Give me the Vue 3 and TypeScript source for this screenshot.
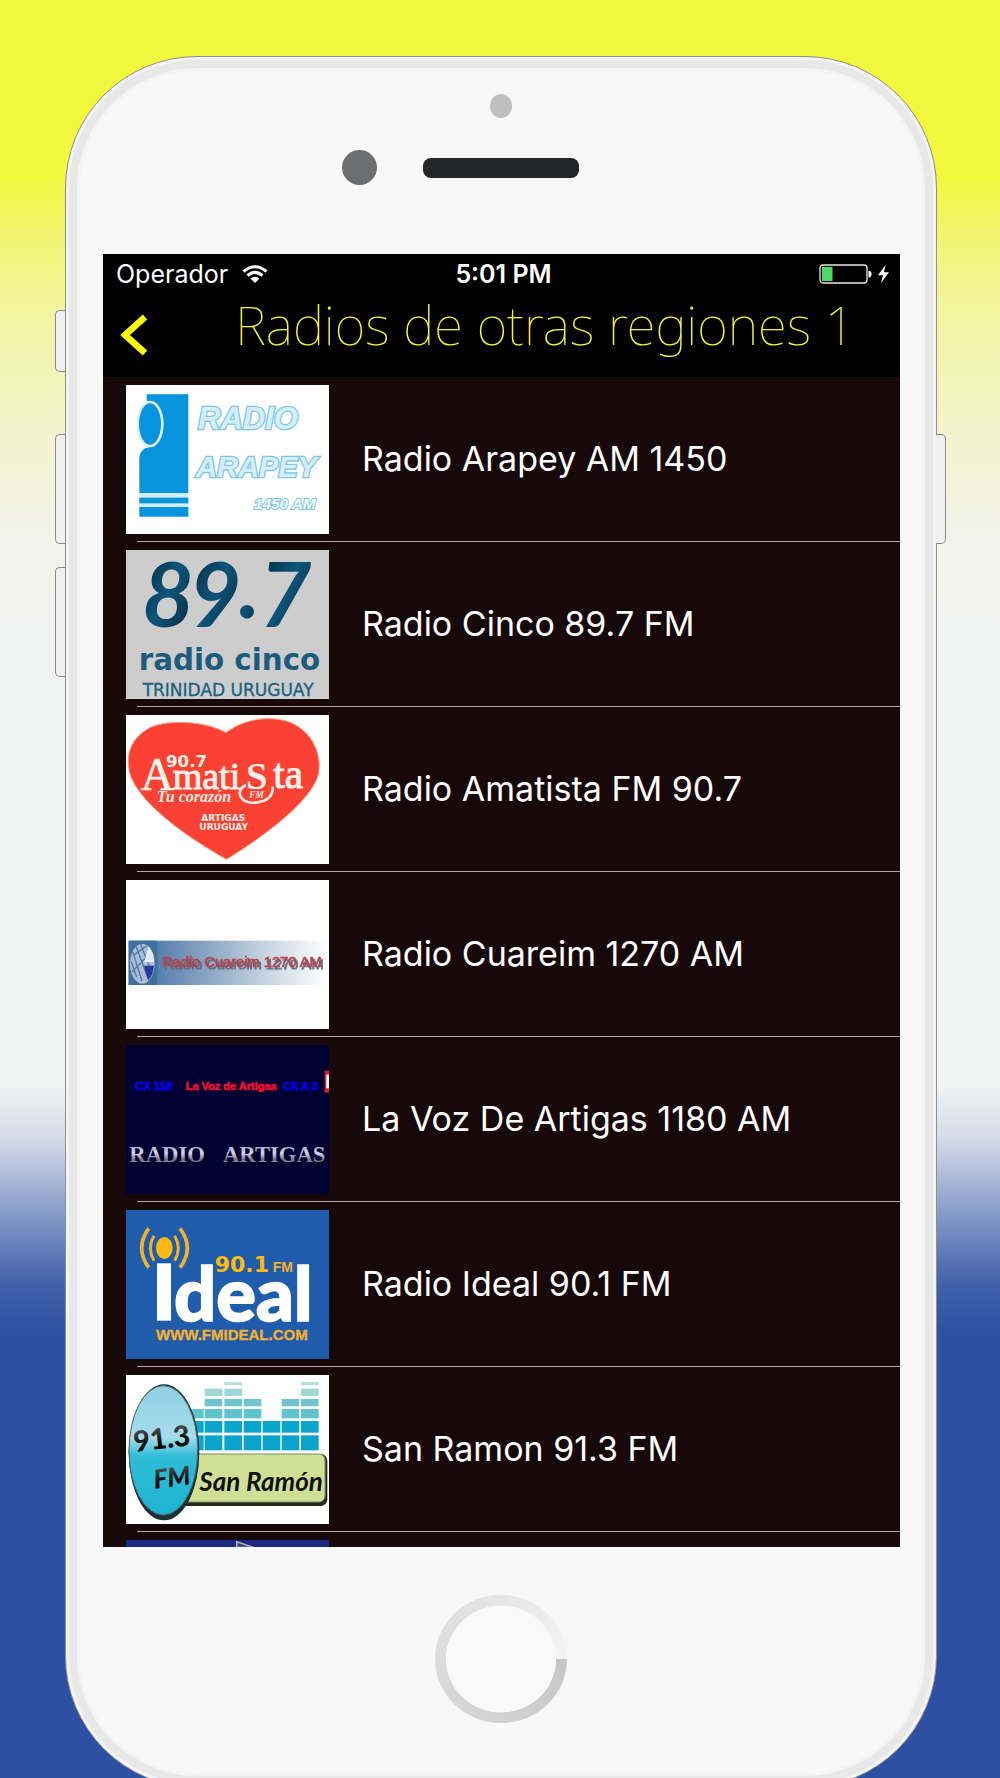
<script setup lang="ts">
interface Station {
  id: string
  name: string
}

const title = 'Radios de otras regiones 1'

const stations: Station[] = [
  { id: 'arapey', name: 'Radio Arapey AM 1450' },
  { id: 'cinco', name: 'Radio Cinco 89.7 FM' },
  { id: 'amatista', name: 'Radio Amatista FM 90.7' },
  { id: 'cuareim', name: 'Radio Cuareim 1270 AM' },
  { id: 'artigas', name: 'La Voz De Artigas 1180 AM' },
  { id: 'ideal', name: 'Radio Ideal 90.1 FM' },
  { id: 'ramon', name: 'San Ramon 91.3 FM' },
  { id: 'next', name: '' },
]

// Equalizer columns of the San Ramón logo: left edge and number of blocks
const eqColumns = [
  { x: 260, blocks: 3 },
  { x: 316, blocks: 5 },
  { x: 375, blocks: 6 },
  { x: 433, blocks: 4 },
  { x: 490, blocks: 2 },
  { x: 547, blocks: 4 },
  { x: 605, blocks: 6 },
]
const eqBlocks = [
  { y: 196, h: 45, fill: '#0aa3cb' },
  { y: 153, h: 35, fill: '#0aa6cb' },
  { y: 117, h: 28, fill: '#5fc2cc' },
  { y: 87, h: 22, fill: '#70c6cc' },
  { y: 56, h: 22, fill: '#9dd8d6' },
  { y: 36, h: 10, fill: '#b9e2de' },
]
</script>

<template>
  <main class="page">
    <div class="phone">
      <span class="side side-mute"></span>
      <span class="side side-up"></span>
      <span class="side side-down"></span>
      <span class="side side-power"></span>

      <div class="bezel-top">
        <span class="sensor"></span>
        <div class="ear">
          <span class="camera"></span>
          <span class="speaker"></span>
          <span class="ear-balance"></span>
        </div>
      </div>

      <section class="screen">
        <div class="status">
          <div class="carrier">
            <span>Operador</span>
            <svg class="wifi" viewBox="0 0 26 19" aria-hidden="true">
              <path d="M1.500 6.500Q13 -3 24.500 6.500" fill="none" stroke="#fff" stroke-width="3" />
              <path d="M5.500 10.500Q13 4.300 20.500 10.500" fill="none" stroke="#fff" stroke-width="3" />
              <path d="M8.500 13.600Q13 10 17.500 13.600L13 18Z" fill="#fff" />
            </svg>
          </div>
          <span class="clock">5:01 PM</span>
          <div class="power">
            <svg class="battery" viewBox="0 0 72 20" aria-hidden="true">
              <rect x="1" y="1" width="47" height="18" rx="3" fill="none" stroke="#e8e8e8" stroke-width="1.300" />
              <rect x="3" y="3" width="10.500" height="14" fill="#4cd964" />
              <path d="M49.500 6.500q3 0 3 3.500t-3 3.500z" fill="#fff" />
              <path d="M66.500 1L59 11.200h5L62 19l8-10.700h-5z" fill="#fff" />
            </svg>
          </div>
        </div>

        <header class="nav">
          <button class="back" type="button" aria-label="Atrás">
            <svg viewBox="0 0 28 42" aria-hidden="true">
              <path d="M25 3L5 21L25 39" fill="none" stroke="#ffff00" stroke-width="6.500" />
            </svg>
          </button>
          <h1>{{ title }}</h1>
        </header>

        <ul class="list">
          <li v-for="s in stations" :key="s.id">
            <a class="station" href="#">
              <svg class="thumb" viewBox="80 15 609 447" aria-hidden="true">
                <g v-if="s.id === 'arapey'">
                  <rect x="80" y="15" width="609" height="447" fill="#fff" />
                  <path d="M142 43H267V339H120V232Q122 206 150 202Q190 190 190 130Q186 72 142 62Z" fill="#0894dc" />
                  <ellipse cx="152" cy="132" rx="37" ry="66" fill="#0894dc" stroke="#d9f2fb" stroke-width="8" />
                  <path d="M104 50Q90 130 108 206L122 200Q104 130 124 68Z" fill="#fff" />
                  <rect x="120" y="339" width="147" height="71" fill="#cdeefb" />
                  <rect x="120" y="353" width="147" height="17" fill="#0894dc" />
                  <rect x="120" y="381" width="147" height="29" fill="#0894dc" />
                  <g class="sans italic" fill="#d5effa" stroke="#80c6e4" stroke-width="8" paint-order="stroke">
                    <text x="296" y="146" font-size="93">RADIO</text>
                    <text x="290" y="290" font-size="87">ARAPEY</text>
                    <text x="464" y="388" font-size="46" fill="#effaff" stroke-width="6">1450 AM</text>
                  </g>
                </g>

                <g v-else-if="s.id === 'cinco'">
                  <defs>
                    <linearGradient id="ink" x1="0" y1="0" x2="1" y2="1">
                      <stop offset="0" stop-color="#06202f" />
                      <stop offset="0.500" stop-color="#0d557a" />
                      <stop offset="1" stop-color="#05202f" />
                    </linearGradient>
                  </defs>
                  <rect x="80" y="15" width="609" height="447" fill="#cdcdcd" />
                  <g class="italic lato" fill="url(#ink)" font-size="270">
                    <text x="128" y="245">8</text>
                    <text x="270" y="245">9</text>
                    <text x="418" y="220">.</text>
                    <text x="480" y="245">7</text>
                  </g>
                  <text class="dejavu bold" x="118" y="375" font-size="88" fill="#1b5c7d">radio cinco</text>
                  <text class="dejavu" x="130" y="453" font-size="51" fill="#1b6183" stroke="#1b6183" stroke-width="1">TRINIDAD URUGUAY</text>
                </g>

                <g v-else-if="s.id === 'amatista'">
                  <rect x="80" y="15" width="609" height="447" fill="#fff" />
                  <path d="M380 68C320 32 190 25 140 60C95 90 80 130 90 185C110 270 250 375 382 448C500 375 640 270 658 190C668 120 630 60 570 36C520 18 440 22 380 68Z" fill="#fb4133" stroke="#f9a28b" stroke-width="3" />
                  <g fill="#fff1e8" stroke="#fff1e8">
                    <text class="dejavu bold" x="200" y="171" font-size="50" stroke="none">90.7</text>
                    <text class="serif" x="124" y="240" font-size="138" stroke-width="2">A</text>
                    <text class="serif" x="220" y="236" font-size="114" stroke-width="3">mati</text>
                    <text class="serif bold" x="440" y="238" font-size="116" stroke="none">S</text>
                    <text class="serif" x="522" y="234" font-size="124" stroke-width="3">ta</text>
                    <path d="M440 225C405 240 420 285 475 277C500 273 522 260 520 230" fill="none" stroke-width="8" />
                    <text class="serif bold italic" x="450" y="265" font-size="28" stroke="none">FM</text>
                    <text class="serif bold italic" x="172" y="277" font-size="48" stroke="none">Tu corazón</text>
                    <text class="dejavu bold" x="306" y="332" font-size="27" stroke="none">ARTIGAS</text>
                    <text class="dejavu bold" x="300" y="359" font-size="27" stroke="none">URUGUAY</text>
                  </g>
                </g>

                <g v-else-if="s.id === 'cuareim'">
                  <defs>
                    <linearGradient id="strip">
                      <stop offset="0" stop-color="#356b9e" />
                      <stop offset="0.300" stop-color="#7797ba" />
                      <stop offset="0.650" stop-color="#bfcddd" />
                      <stop offset="1" stop-color="#fff" />
                    </linearGradient>
                  </defs>
                  <rect x="80" y="15" width="609" height="447" fill="#fff" />
                  <rect x="88" y="197" width="594" height="133" fill="url(#strip)" />
                  <rect x="88" y="197" width="86" height="133" fill="#3d70a0" />
                  <ellipse cx="129" cy="266" rx="37" ry="60" fill="#a9bdd6" />
                  <path d="M100 230L128 318M110 214L146 310M124 208L158 296M96 260L112 306M98 290L158 230M104 240L142 212" stroke="#4f76a6" stroke-width="4" />
                  <path d="M134 262L148 215Q164 232 164 262Z" fill="#e4ebf4" />
                  <path d="M134 272H164Q160 305 146 316Z" fill="#2938a0" />
                  <text class="regular raised" x="188" y="276" font-size="44" fill="#b8434f" stroke="#b8434f" stroke-width="2">Radio Cuareim 1270 AM</text>
                </g>

                <g v-else-if="s.id === 'artigas'">
                  <defs>
                    <linearGradient id="steel" x1="0" y1="0" x2="0" y2="1">
                      <stop offset="0" stop-color="#8e8ea6" />
                      <stop offset="0.450" stop-color="#d6d6ee" />
                      <stop offset="0.700" stop-color="#77727c" />
                      <stop offset="1" stop-color="#b5b2b6" />
                    </linearGradient>
                  </defs>
                  <rect x="80" y="15" width="609" height="447" fill="#000033" />
                  <g class="sans" stroke-width="2">
                    <text x="107" y="150" font-size="34" fill="#0000f0" stroke="#0000f0">CX 118</text>
                    <text x="259" y="150" font-size="33" fill="#f0102c" stroke="#f0102c">La Voz de Artigas</text>
                    <text x="552" y="150" font-size="33" fill="#0000f0" stroke="#0000f0">CX A 3</text>
                  </g>
                  <path d="M676 92H689V158H676Z" fill="#d5202c" />
                  <path d="M681 104H689V145H681Z" fill="#fff" />
                  <g class="serif bold" fill="url(#steel)" font-size="68">
                    <text x="90" y="366">RADIO</text>
                    <text x="371" y="366">ARTIGAS</text>
                  </g>
                </g>

                <g v-else-if="s.id === 'ideal'">
                  <rect x="80" y="15" width="609" height="447" fill="#1f5cab" />
                  <ellipse cx="195" cy="129" rx="25" ry="33" fill="#fdb913" />
                  <g fill="none" stroke="#f3b02c" stroke-width="9">
                    <path d="M164 92Q142 129 164 167M226 92Q248 129 226 167" />
                    <path d="M148 70Q106 129 148 188M242 70Q286 129 242 188" stroke-width="11" />
                  </g>
                  <rect x="173" y="175" width="42" height="172" fill="#fff" />
                  <text class="lato black" x="224" y="347" font-size="222" fill="#fff" stroke="#fff" stroke-width="5">deal</text>
                  <rect x="346" y="145" width="236" height="59" fill="#1f5cab" />
                  <text class="dejavu bold" x="346" y="202" font-size="66" fill="#fdb913">90.1</text>
                  <text class="sans" x="520" y="202" font-size="42" fill="#f3b02c">FM</text>
                  <text class="sans" x="170" y="406" font-size="45" fill="#f3b02c" stroke="#f3b02c" stroke-width="1">WWW.FMIDEAL.COM</text>
                </g>

                <g v-else-if="s.id === 'ramon'">
                  <defs>
                    <linearGradient id="disc" x1="0" y1="0" x2="0" y2="1">
                      <stop offset="0" stop-color="#8fd0e2" />
                      <stop offset="0.400" stop-color="#a5dcec" />
                      <stop offset="0.550" stop-color="#2dbcd6" />
                      <stop offset="1" stop-color="#1fb4d2" />
                    </linearGradient>
                    <linearGradient id="digits" x1="0" y1="0" x2="0" y2="1">
                      <stop offset="0" stop-color="#6b6b6b" />
                      <stop offset="0.700" stop-color="#000" />
                    </linearGradient>
                  </defs>
                  <rect x="80" y="15" width="609" height="447" fill="#fff" />
                  <template v-for="col in eqColumns" :key="col.x">
                    <rect v-for="b in eqBlocks.slice(0, col.blocks)" :key="b.y" :x="col.x" :y="b.y" width="53" :height="b.h" :fill="b.fill" />
                  </template>
                  <rect x="230" y="252" width="454" height="156" rx="20" fill="#26291f" />
                  <rect x="230" y="252" width="447" height="144" rx="18" fill="#cfe096" stroke="#83905a" stroke-width="3" />
                  <ellipse cx="194" cy="247" rx="106" ry="204" fill="#1d3036" />
                  <ellipse cx="192" cy="241" rx="103" ry="194" fill="url(#disc)" stroke="#4d6870" stroke-width="3" />
                  <g class="lato black" fill="url(#digits)" transform="rotate(-7 190 220)">
                    <text x="104" y="236" font-size="86">91.3</text>
                    <text class="italic" x="150" y="352" font-size="78">FM</text>
                  </g>
                  <text class="lato italic bold" x="300" y="362" font-size="78" fill="#111">San Ramón</text>
                </g>

                <g v-else>
                  <rect x="80" y="15" width="609" height="447" fill="#1a2a80" />
                  <path d="M412 20L465 38H412Z" fill="#39456f" stroke="#a7adbf" stroke-width="5" />
                </g>
              </svg>
              <span v-if="s.name" class="name">{{ s.name }}</span>
            </a>
          </li>
        </ul>
      </section>

      <div class="bezel-bottom">
        <button class="home" type="button" aria-label="Inicio"></button>
      </div>
    </div>
  </main>
</template>

<style>
body {
  margin: 0;
}
</style>

<style scoped>
.page {
  box-sizing: border-box;
  height: 100vh;
  padding: 56px 63px 0 65px;
  display: flex;
  overflow: hidden;
  background: linear-gradient(
    to bottom,
    #f1f83e 0%,
    #f1f83e 10%,
    #f1f56e 13%,
    #f2f5a4 18%,
    #f2f4cb 24%,
    #f2f3ea 30%,
    #f1f3f3 36%,
    #f1f3f3 61%,
    #d5dbe8 64%,
    #8b9fcb 68%,
    #4563ad 72%,
    #2d50a2 75%,
    #2d50a2 100%
  );
  font-family: Inter, 'Liberation Sans', sans-serif;
}

.phone {
  position: relative;
  flex: 1;
  display: flex;
  flex-direction: column;
  box-sizing: border-box;
  margin-bottom: -10px;
  border: 1px solid #8f8f8b;
  border-radius: 132px;
  background: #f8f8f8;
  box-shadow:
    inset 0 0 0 3px #f3f3f3,
    inset 0 0 0 11px #e8e8e8,
    inset 0 0 0 14px #f4f4f4;
}

.side {
  position: absolute;
  box-sizing: border-box;
  width: 10px;
  border: 1px solid #8a8a88;
  background: #f0f0f0;
}

.side-mute,
.side-up,
.side-down {
  left: -11px;
  border-right: 0;
  border-radius: 5px 0 0 5px;
}

.side-mute {
  top: 253px;
  height: 62px;
}

.side-up,
.side-power {
  top: 377px;
  height: 110px;
}

.side-down {
  top: 510px;
  height: 110px;
}

.side-power {
  right: -10px;
  border-left: 0;
  border-radius: 0 5px 5px 0;
}

.bezel-top {
  height: 197px;
  flex: none;
  display: flex;
  flex-direction: column;
  align-items: center;
}

.sensor {
  width: 22px;
  height: 24px;
  margin-top: 37px;
  border-radius: 50%;
  background: #bfbfc0;
}

.ear {
  display: flex;
  align-items: center;
  gap: 46px;
  margin-top: 32px;
}

.camera,
.ear-balance {
  width: 35px;
  height: 35px;
}

.camera {
  border-radius: 50%;
  background: #6d6e70;
}

.speaker {
  width: 156px;
  height: 20px;
  border-radius: 8px;
  background: #242527;
}

.screen {
  flex: 1;
  min-height: 0;
  margin: 0 36px 0 37px;
  display: flex;
  flex-direction: column;
  overflow: hidden;
  background: #170809;
  color: #fff;
}

.status {
  flex: none;
  height: 40px;
  padding: 0 9px 0 13px;
  display: grid;
  grid-template-columns: 1fr auto 1fr;
  align-items: center;
  background: #000;
  font-size: 25px;
  line-height: 40px;
}

.carrier {
  display: flex;
  align-items: center;
  gap: 14px;
}

.wifi {
  width: 26px;
  height: 19px;
}

.clock {
  font-weight: 600;
}

.power {
  display: flex;
  justify-content: flex-end;
}

.battery {
  width: 72px;
  height: 20px;
}

.nav {
  flex: none;
  height: 83px;
  padding: 0 16px;
  display: flex;
  align-items: flex-start;
  background: #000;
}

.back {
  width: 32px;
  height: 42px;
  margin-top: 20px;
  padding: 0;
  border: 0;
  background: none;
}

.back svg {
  display: block;
  width: 30px;
  height: 42px;
}

h1 {
  margin: 0 29px 0 0;
  flex: 1;
  color: #f5f532;
  font-family: 'Noto Sans', 'Open Sans', sans-serif;
  font-size: 53px;
  font-weight: 100;
  line-height: 62px;
  text-align: right;
  white-space: nowrap;
}

.list {
  margin: 0;
  padding: 0;
  list-style: none;
}

.list li {
  margin-left: 34px;
  border-bottom: 1px solid #aea8a9;
}

.station {
  display: flex;
  align-items: center;
  height: 150px;
  padding: 7px 0;
  margin-left: -11px;
  gap: 33px;
  color: inherit;
  text-decoration: none;
}

.thumb {
  flex: none;
  width: 203px;
  height: 149px;
}

.name {
  font-size: 34px;
  line-height: 40px;
  white-space: nowrap;
}

.bezel-bottom {
  flex: none;
  height: 240px;
  box-sizing: border-box;
  padding-top: 48px;
  display: flex;
  justify-content: center;
  align-items: flex-start;
}

.home {
  width: 132px;
  height: 128px;
  padding: 10px;
  border: 0;
  border-radius: 50%;
  background:
    radial-gradient(ellipse closest-side, #f9f9f9 0 83%, transparent 84%),
    conic-gradient(from 90deg, #c6c6c6, #d2d2d2 25%, #dcdcdc 50%, #e6e6e6 75%, #f4f4f4);
}

.sans,
.regular {
  font-family: 'Liberation Sans', sans-serif;
  font-weight: 700;
}

.regular {
  font-weight: 400;
}

.raised {
  filter: drop-shadow(6px 7px 1px #5b6b80);
}

.dejavu {
  font-family: 'DejaVu Sans', sans-serif;
}

.lato {
  font-family: Lato, sans-serif;
  font-weight: 700;
}

.serif {
  font-family: 'Liberation Serif', serif;
}

.bold {
  font-weight: 700;
}

.black {
  font-weight: 900;
}

.italic {
  font-style: italic;
}
</style>
